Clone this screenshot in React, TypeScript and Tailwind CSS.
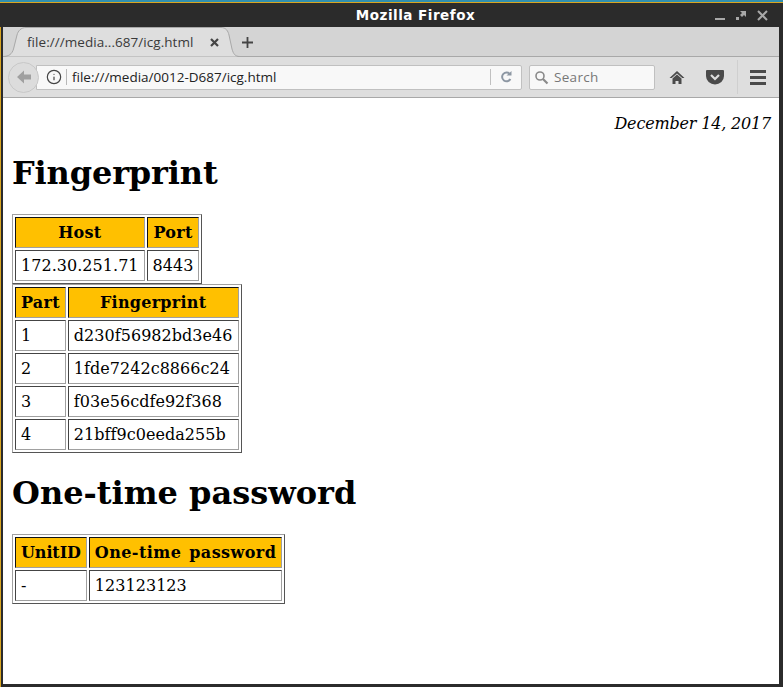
import { Info } from "lucide-react";

const SERIF = "font-['DejaVu_Serif',serif]";

const thClass =
  "bg-[#ffc000] px-[5px] py-[5px] leading-[19px] font-bold [word-spacing:2px] text-center border border-t-[#111] border-l-[#111] border-r-[#a0a0a0] border-b-[#a0a0a0]";
const tdClass =
  "px-[5px] py-[5px] leading-[19px] tracking-[0.04px] text-left border border-t-[#444] border-l-[#444] border-r-[#a0a0a0] border-b-[#a0a0a0]";
const tableClass =
  "border-separate border-spacing-[2px] border border-t-[#a0a0a0] border-l-[#a0a0a0] border-r-[#555] border-b-[#555]";

function thTracking(h: string) {
  if (h === "UnitID") return "tracking-[-0.1px]";
  if (h === "One-time password") return "tracking-[0.43px]";
  return "tracking-[0.25px]";
}

function DataTable({ head, rows }: { head: string[]; rows: string[][] }) {
  return (
    <table className={tableClass}>
      <thead>
        <tr>
          {head.map((h) => (
            <th key={h} className={`${thClass} ${thTracking(h)}`}>{h}</th>
          ))}
        </tr>
      </thead>
      <tbody>
        {rows.map((row) => (
          <tr key={row[0]}>
            {row.map((c) => (
              <td key={c} className={tdClass}>{c}</td>
            ))}
          </tr>
        ))}
      </tbody>
    </table>
  );
}

export default function App() {
  return (
    <div className="h-[687px] w-[783px] overflow-hidden flex flex-col bg-[#2b2b2b] border-t-2 border-t-[#2f8fb0] font-['Open_Sans',sans-serif]">
      {/* title bar */}
      <div className="h-[25px] shrink-0 flex items-center justify-between bg-[#2b2b2b] border-t border-t-[#d9a520] pr-[15px]">
        <div className="w-[60px]" />
        <div className="text-white text-[13.5px] font-semibold tracking-[0.5px] font-['DejaVu_Sans',sans-serif] ml-[56px]">Mozilla Firefox</div>
        <div className="flex items-center gap-[10px]">
          <svg width="11" height="11" viewBox="0 0 11 11"><rect x="0" y="8" width="10" height="2" fill="#a8a8a8" /></svg>
          <svg width="11" height="11" viewBox="0 0 11 11">
            <rect x="0" y="7" width="3" height="3" fill="#a8a8a8" />
            <path d="M4 1h6v6L8 5 6 7 4 5l2-2z" fill="#a8a8a8" />
          </svg>
          <svg width="11" height="11" viewBox="0 0 11 11"><path d="M1 1l9 9M10 1l-9 9" stroke="#a8a8a8" strokeWidth="2" /></svg>
        </div>
      </div>

      <div className="flex-1 min-h-0 border-l border-l-[#d9a520]">
        <div className="h-full flex flex-col border-l-2 border-l-[#2b2b2b] border-r-[4px] border-r-[#2b2b2b] border-b-[3px] border-b-[#2b2b2b]">
          {/* tab strip */}
          <div className="h-[30px] shrink-0 bg-[#d4d4d4] border-b border-b-[#a8a8a8] flex items-end">
            <div className="relative h-[30px] w-[237px] -mb-px flex items-center pl-[24px] pr-[21px] justify-between">
              <svg className="absolute left-0 top-0" width="237" height="30" viewBox="0 0 237 30">
                <path
                  d="M0 29.5C6 29.5 9 27 10.5 22L14 8C15 4 18 .5 23 .5H218C223 .5 225 4 226 8L229 22C230.5 27 232 29.5 237 29.5"
                  fill="#dedede"
                  stroke="#a8a8a8"
                />
              </svg>
              <span className="relative text-[13.5px] tracking-[0.05px] text-[#3a3a3a]">file:///media...687/icg.html</span>
              <svg className="relative" width="9" height="9" viewBox="0 0 9 9"><path d="M1 1l7 7M8 1l-7 7" stroke="#444" strokeWidth="2.2" /></svg>
            </div>
            <svg className="ml-[1px] mb-[7px]" width="13" height="13" viewBox="0 0 13 13"><path d="M6.5 1v11M1 6.5h11" stroke="#444" strokeWidth="1.8" /></svg>
          </div>

          {/* nav bar */}
          <div className="h-[41px] shrink-0 bg-[#dedede] border-b border-b-[#a8a8a8] flex items-center pl-[5px]">
            <div className="relative z-10 shrink-0 w-[31px] h-[31px] rounded-full bg-[#dcdcdc] border border-[#c8c8c8] flex items-center justify-center">
              <svg width="16" height="14" viewBox="0 0 16 14"><path d="M8 .5L1 7l7 6.5v-4h7v-5H8z" fill="#a0a0a0" /></svg>
            </div>
            <div className="-ml-[3px] shrink-0 w-[486px] h-[25px] bg-[#f8f8f8] border border-[#c0c0c0] rounded-r-[2px] flex items-center">
              <Info size={16} strokeWidth={1.8} className="ml-[9px] text-[#444]" />
              <div className="w-px h-[16px] bg-[#b8b8b8] ml-[4px]" />
              <span className="ml-[5px] text-[13.5px] text-[#222] flex-1">file:///media/0012-D687/icg.html</span>
              <div className="w-px h-[16px] bg-[#c0c0c0]" />
              <svg className="mx-[9px]" width="12" height="12" viewBox="0 0 12 12" fill="none">
                <path d="M10 3.2A4.4 4.4 0 1 0 10.4 8" stroke="#8d97a3" strokeWidth="2" />
                <path d="M6.5 4.5H11.5V0z" fill="#8d97a3" />
              </svg>
            </div>
            <div className="ml-[7px] shrink-0 w-[126px] h-[25px] bg-[#f8f8f8] border border-[#c0c0c0] rounded-[2px] flex items-center">
              <svg className="ml-[4px]" width="15" height="15" viewBox="0 0 15 15" fill="none">
                <circle cx="6" cy="6" r="4" stroke="#8a8a8a" strokeWidth="1.6" />
                <path d="M9 9l4.5 4.5" stroke="#8a8a8a" strokeWidth="2.2" />
              </svg>
              <span className="ml-[5px] text-[13.5px] text-[#777] tracking-[0.3px]">Search</span>
            </div>
            <svg className="ml-[14px] shrink-0" width="16" height="15" viewBox="0 0 16 15">
              <path d="M8 1L0.5 8h2.3L8 3.4 13.2 8h2.3z" fill="#4a4a4a" />
              <path d="M3.5 8.6L8 4.6l4.5 4V14H9.5v-3h-3v3H3.5z" fill="#4a4a4a" />
            </svg>
            <svg className="ml-[21px] shrink-0" width="18" height="16" viewBox="0 0 18 16">
              <path d="M1 1h16a1 1 0 0 1 1 1v5a9 8.5 0 0 1-18 0V2a1 1 0 0 1 1-1z" fill="#4a4a4a" />
              <path d="M5 6l4 4 4-4" stroke="#dedede" strokeWidth="2.2" fill="none" />
            </svg>
            <div className="ml-[13px] shrink-0 w-px h-[34px] bg-[#cfcfcf]" />
            <div className="ml-[12px] shrink-0 flex flex-col gap-[3px]">
              <div className="w-[16px] h-[3px] bg-[#4a4a4a]" />
              <div className="w-[16px] h-[3px] bg-[#4a4a4a]" />
              <div className="w-[16px] h-[3px] bg-[#4a4a4a]" />
            </div>
          </div>

          {/* page content */}
          <div className={`flex-1 bg-white text-black text-[16px] pl-[9px] pr-[8px] pt-[14px] min-h-0 ${SERIF}`}>
            <div className="text-right italic tracking-[-0.18px]">December 14, 2017</div>
            <h1 className="text-[32px] font-bold mt-[18px] mb-[22px] leading-[38px] tracking-[-0.15px]">Fingerprint</h1>
            <DataTable head={["Host", "Port"]} rows={[["172.30.251.71", "8443"]]} />
            <DataTable
              head={["Part", "Fingerprint"]}
              rows={[
                ["1", "d230f56982bd3e46"],
                ["2", "1fde7242c8866c24"],
                ["3", "f03e56cdfe92f368"],
                ["4", "21bff9c0eeda255b"],
              ]}
            />
            <h1 className="text-[32px] font-bold mt-[21px] mb-[22px] leading-[38px]">One-time password</h1>
            <DataTable head={["UnitID", "One-time password"]} rows={[["-", "123123123"]]} />
          </div>
        </div>
      </div>
    </div>
  );
}
